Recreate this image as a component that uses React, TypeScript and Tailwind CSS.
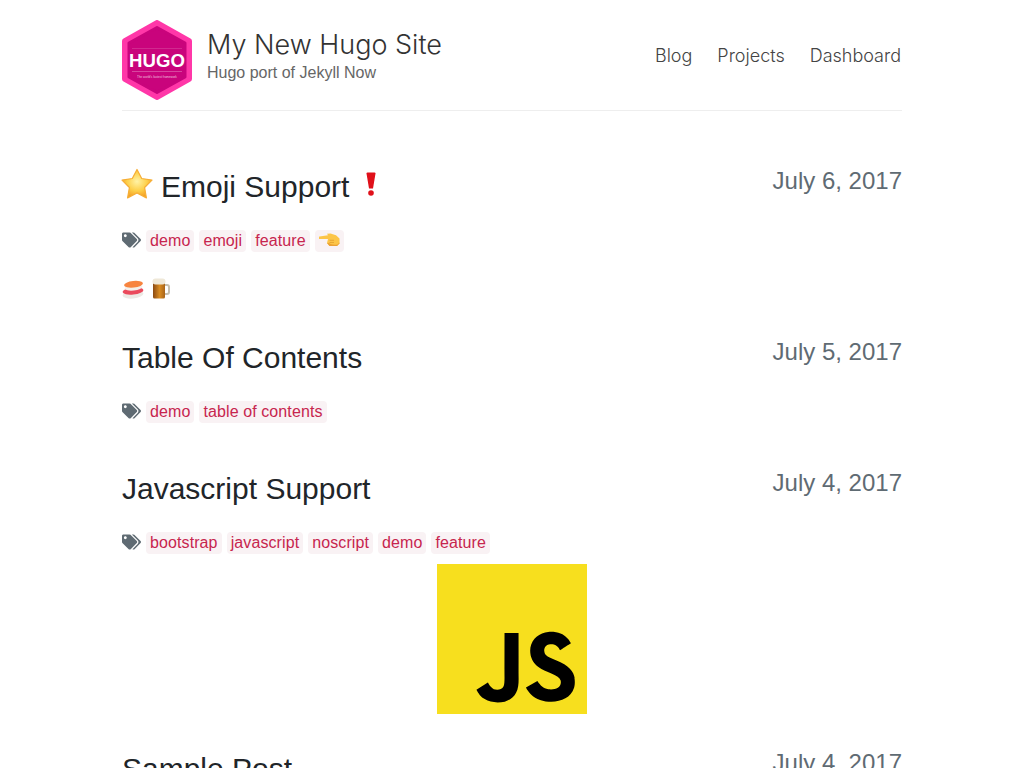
import React from 'react';
import { FaTags } from 'react-icons/fa';

const HugoLogo = () => (
  <svg viewBox="0 0 70 80" className="w-[70px] h-[80px] shrink-0">
    <path d="M35 3L67 21V59L35 77L3 59V21z" fill="#ff37a8" stroke="#ff37a8" strokeWidth="6" strokeLinejoin="round" />
    <path d="M35 7.500L63 23V57L35 72.500L7 57V23z" fill="#c9047c" stroke="#c9047c" strokeWidth="3" strokeLinejoin="round" />
    <rect x="10" y="28" width="50" height="0.6" fill="#ffffff" opacity="0.25" />
    <rect x="10" y="51" width="50" height="0.6" fill="#ffffff" opacity="0.45" />
    <text x="35" y="46.500" textAnchor="middle" fontFamily="'Liberation Sans', sans-serif" fontWeight="700" fontSize="18.600" fill="#ffffff">HUGO</text>
    <text x="35" y="57.500" textAnchor="middle" fontFamily="'Liberation Sans', sans-serif" fontSize="3" fill="#ffffff" opacity="0.7">The world's fastest framework</text>
  </svg>
);

const StarEmoji = () => (
  <svg viewBox="0 0 32 32" className="w-[32px] h-[32px] -ml-[1px] -mt-[6px] shrink-0">
    <defs>
      <radialGradient id="star" cx="0.5" cy="0.42" r="0.6">
        <stop offset="0" stopColor="#fff3a6" />
        <stop offset="0.55" stopColor="#fdd04a" />
        <stop offset="1" stopColor="#f39a1f" />
      </radialGradient>
    </defs>
    <path d="M16 1.500L20.700 10.500L31 12.060L23.600 19.500L25.400 29.900L16 25L6.600 29.900L8.400 19.500L1 12.060L11.300 10.500z" fill="url(#star)" stroke="#f6ad35" strokeWidth="1.200" strokeLinejoin="round" />
  </svg>
);

const BangEmoji = () => (
  <svg viewBox="0 0 10 24" className="w-[10px] h-[24px] ml-[9px] -mt-[6px] shrink-0">
    <path d="M0.500 1.500a1 1 0 0 1 1-1h7a1 1 0 0 1 1 1L7 16.500H3z" fill="#e0101a" />
    <circle cx="5" cy="21" r="2.800" fill="#e0101a" />
  </svg>
);

const HandEmoji = () => (
  <svg viewBox="0 0 21 16" className="w-[21px] h-4 -mt-[2px]">
    <path d="M0.500 4.500L9 3.300L8 1.800L11.500 1.500L17 3.200L20.500 6.500V11.500L18 14H10.500L8 11L9 7H1a1.200 1.200 0 0 1-.5-2.500z" fill="#fcc548" />
    <path d="M10 11c2 1.600 5 2 8.500 1.400L20.500 10.500V11.500L18 14H10.500L8 11z" fill="#eba236" />
    <path d="M10.500 8.300H15M10.500 10.500H15" stroke="#e09a2c" strokeWidth="0.700" fill="none" />
  </svg>
);

const SushiEmoji = () => (
  <svg viewBox="0 0 22 19" className="w-[22px] h-[19px]">
    <ellipse cx="11" cy="14.500" rx="10.500" ry="4" fill="#ece9e4" transform="rotate(-6 11 14.500)" />
    <ellipse cx="11" cy="11" rx="10.500" ry="3.600" fill="#ea4a5c" transform="rotate(-6 11 11)" />
    <ellipse cx="11.500" cy="7.500" rx="9" ry="3" fill="#f3f0ea" transform="rotate(-6 11.500 7.500)" />
    <ellipse cx="11.500" cy="4.300" rx="9.500" ry="3.300" fill="#f7843f" transform="rotate(-6 11.500 4.300)" />
  </svg>
);

const BeerEmoji = () => (
  <svg viewBox="0 0 18 21" className="w-[18px] h-[21px] -mt-[2px]">
    <defs>
      <linearGradient id="beer" x1="0" y1="0" x2="1" y2="0">
        <stop offset="0" stopColor="#8b4a12" />
        <stop offset="0.55" stopColor="#d98c22" />
        <stop offset="1" stopColor="#a9641a" />
      </linearGradient>
    </defs>
    <path d="M12 7h3a2 2 0 0 1 2 2v5a2 2 0 0 1-2 2h-3" fill="none" stroke="#c6bfb0" strokeWidth="2" />
    <rect x="1" y="3" width="12" height="17.500" rx="1.500" fill="url(#beer)" />
    <path d="M0.500 3.500a3 3 0 0 1 3-3h7a3 3 0 0 1 3 3c0 2-1 3-3 3h-7c-2 0-3-1-3-3z" fill="#efe8d8" />
  </svg>
);

const Tag = ({ children }: { children: React.ReactNode }) => (
  <span className="inline-flex items-center h-[22px] px-1 rounded bg-[#f9f2f4] text-[#c7254e] text-base tracking-[0.1px]">{children}</span>
);

const Tags = ({ items }: { items: React.ReactNode[] }) => (
  <div className="flex items-center gap-[5px] h-[24px]">
    <FaTags className="w-[19px] h-[16px] -mt-[3px] text-[#5f6b73]" />
    {items.map((t, i) => <Tag key={i}>{t}</Tag>)}
  </div>
);

const PostHead = ({ title, date }: { title: React.ReactNode; date: string }) => (
  <div className="flex justify-between items-start h-[36px]">
    <h2 className="flex items-center h-[36px] text-[30px] leading-[36px] text-[#212529]">{title}</h2>
    <span className="text-2xl leading-[24px] text-[#5f6b73]">{date}</span>
  </div>
);

export default function App() {
  return (
    <div className="h-[768px] overflow-hidden bg-white font-['Liberation_Sans',sans-serif]">
      <div className="w-[780px] mx-auto">
        <header className="flex items-center justify-between h-[111px] pt-[20px] pb-[10px] border-b border-[#eeeeee]">
          <div className="flex items-center gap-[15px]">
            <HugoLogo />
            <div className="flex flex-col -mt-[8px]">
              <span className="font-['Inter',sans-serif] font-light text-[27px] leading-[32px] text-[#333333]">My New Hugo Site</span>
              <span className="text-base leading-[23px] text-[#666666]">Hugo port of Jekyll Now</span>
            </div>
          </div>
          <nav className="flex gap-[25px] -mt-[9px] mr-[1px] font-['Inter',sans-serif] font-light text-lg text-[#444444]">
            <a href="#blog">Blog</a>
            <a href="#projects">Projects</a>
            <a href="#dashboard">Dashboard</a>
          </nav>
        </header>

        <main className="pt-[58px]">
          <article>
            <PostHead
              title={<span className="flex items-center gap-2"><StarEmoji />Emoji Support<BangEmoji /></span>}
              date="July 6, 2017"
            />
            <div className="mt-[24px]">
              <Tags items={['demo', 'emoji', 'feature', <HandEmoji />]} />
            </div>
            <div className="flex items-center gap-[8px] mt-[25px] h-[22px]">
              <SushiEmoji />
              <BeerEmoji />
            </div>
          </article>

          <article className="mt-[40px]">
            <PostHead title="Table Of Contents" date="July 5, 2017" />
            <div className="mt-[24px]">
              <Tags items={['demo', 'table of contents']} />
            </div>
          </article>

          <article className="mt-[47px]">
            <PostHead title="Javascript Support" date="July 4, 2017" />
            <div className="mt-[24px]">
              <Tags items={['bootstrap', 'javascript', 'noscript', 'demo', 'feature']} />
            </div>
            <div className="flex justify-center mt-[9px]">
              <svg viewBox="0 0 24 24" className="w-[150px] h-[150px]">
                <rect width="24" height="24" fill="#f7df1e" />
                <path d="M22.034 18.276c-.175-1.095-.888-2.015-3.003-2.873-.736-.345-1.554-.585-1.797-1.14-.091-.33-.105-.51-.046-.705.15-.646.915-.84 1.515-.66.39.12.75.42.976.9 1.034-.676 1.034-.676 1.755-1.125-.27-.42-.404-.601-.586-.78-.63-.705-1.469-1.065-2.834-1.034l-.705.089c-.676.165-1.32.525-1.71 1.005-1.14 1.291-.811 3.541.569 4.471 1.365 1.02 3.361 1.244 3.616 2.205.24 1.17-.87 1.545-1.966 1.41-.811-.18-1.26-.586-1.755-1.336l-1.83 1.051c.21.48.45.689.81 1.109 1.74 1.756 6.09 1.666 6.871-1.004.029-.09.24-.705.074-1.65l.046.067zm-8.983-7.245h-2.248c0 1.938-.009 3.864-.009 5.805 0 1.232.063 2.363-.138 2.711-.33.689-1.18.601-1.566.48-.396-.196-.597-.466-.83-.855-.063-.105-.11-.196-.127-.196l-1.825 1.125c.305.63.75 1.172 1.324 1.517.855.51 2.004.675 3.207.405.783-.226 1.458-.691 1.811-1.411.51-.93.402-2.07.397-3.346.012-2.054 0-4.109 0-6.179l.004-.056z" fill="#000000" />
              </svg>
            </div>
          </article>

          <article className="mt-[37px]">
            <PostHead title="Sample Post" date="July 4, 2017" />
          </article>
        </main>
      </div>
    </div>
  );
}
